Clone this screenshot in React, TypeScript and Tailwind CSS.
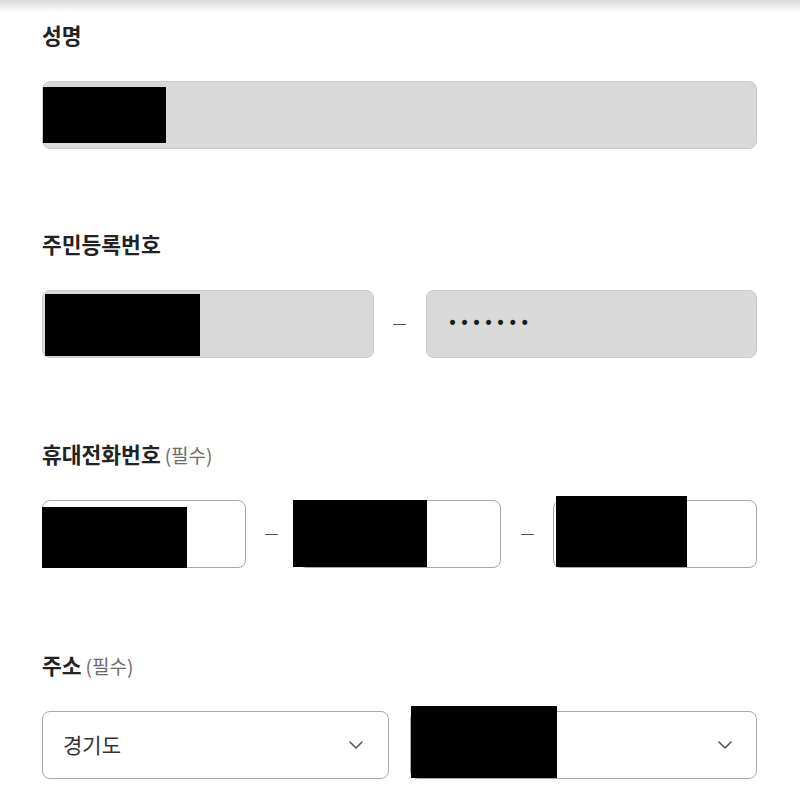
import React from 'react'

const font = { fontFamily: '"Noto Sans CJK KR", "Noto Sans", sans-serif' }

// redaction block painted over a field
const Mask = ({ className }: { className: string }) => <div className={`absolute bg-black ${className}`} />

const Label = ({ text, required }: { text: string; required?: boolean }) => (
  <div className="h-7 leading-7 text-[21.5px] font-bold text-[#222] whitespace-nowrap">
    {text}
    {required && <span className="ml-1 text-[19px] font-normal text-[#6b6b6b]">(필수)</span>}
  </div>
)

const Dash = () => <div className="w-[13px] h-px bg-[#555]" />

const Chevron = () => (
  <svg width="14" height="8" viewBox="0 0 14 8" fill="none">
    <path d="M1 1l6 6 6-6" stroke="#555" strokeWidth="1.6" strokeLinecap="round" strokeLinejoin="round" />
  </svg>
)

export default function App() {
  return (
    <div className="w-[800px] h-[801px] bg-white overflow-hidden" style={font}>
      <div className="h-3 bg-gradient-to-b from-[#d8d8d8] to-white" />
      <div className="pl-[42px] pr-[43px] pt-[9px] flex flex-col">
        {/* 성명 */}
        <Label text="성명" />
        <div className="relative mt-8 h-[68px] rounded-lg border border-[#cacaca] bg-[#d9d9d9]">
          <Mask className="left-0 top-[5px] w-[123px] h-[56px]" />
        </div>

        {/* 주민등록번호 */}
        <div className="mt-[81px]">
          <Label text="주민등록번호" />
        </div>
        <div className="mt-8 grid grid-cols-[1fr_52px_1fr] items-center">
          <div className="relative h-[68px] rounded-lg border border-[#cacaca] bg-[#d9d9d9]">
            <Mask className="left-[2px] top-[3px] w-[155px] h-[62px]" />
          </div>
          <div className="flex justify-center">
            <Dash />
          </div>
          <div className="h-[68px] rounded-lg border border-[#cacaca] bg-[#d9d9d9] flex items-center pl-[21px]">
            <span className="text-[17px] tracking-[2px] text-[#1a1a1a]" style={{ fontFamily: '"DejaVu Sans", sans-serif' }}>
              •••••••
            </span>
          </div>
        </div>

        {/* 휴대전화번호 */}
        <div className="mt-[82px]">
          <Label text="휴대전화번호" required />
        </div>
        <div className="mt-8 grid grid-cols-[1fr_52px_1fr_52px_1fr] items-center">
          <div className="relative h-[68px] rounded-lg border border-[#a8a8a8] bg-white">
            <Mask className="-left-px top-[6px] w-[145px] h-[61px]" />
          </div>
          <div className="flex justify-center">
            <Dash />
          </div>
          <div className="relative h-[68px] rounded-lg border border-[#a8a8a8] bg-white">
            <Mask className="-left-[6px] -top-px w-[134px] h-[67px]" />
          </div>
          <div className="flex justify-center">
            <Dash />
          </div>
          <div className="relative h-[68px] rounded-lg border border-[#a8a8a8] bg-white">
            <Mask className="left-[2px] -top-[5px] w-[131px] h-[71px]" />
          </div>
        </div>

        {/* 주소 */}
        <div className="mt-[83px]">
          <Label text="주소" required />
        </div>
        <div className="mt-8 grid grid-cols-2 gap-[21px]">
          <div className="h-[68px] rounded-lg border border-[#a8a8a8] bg-white flex items-center justify-between pl-5 pr-[25px]">
            <span className="text-[21px] text-[#333]">경기도</span>
            <Chevron />
          </div>
          <div className="relative h-[68px] rounded-lg border border-[#a8a8a8] bg-white flex items-center justify-end pr-[24px]">
            <Chevron />
            <Mask className="left-0 -top-[6px] w-[146px] h-[72px]" />
          </div>
        </div>
      </div>
    </div>
  )
}
